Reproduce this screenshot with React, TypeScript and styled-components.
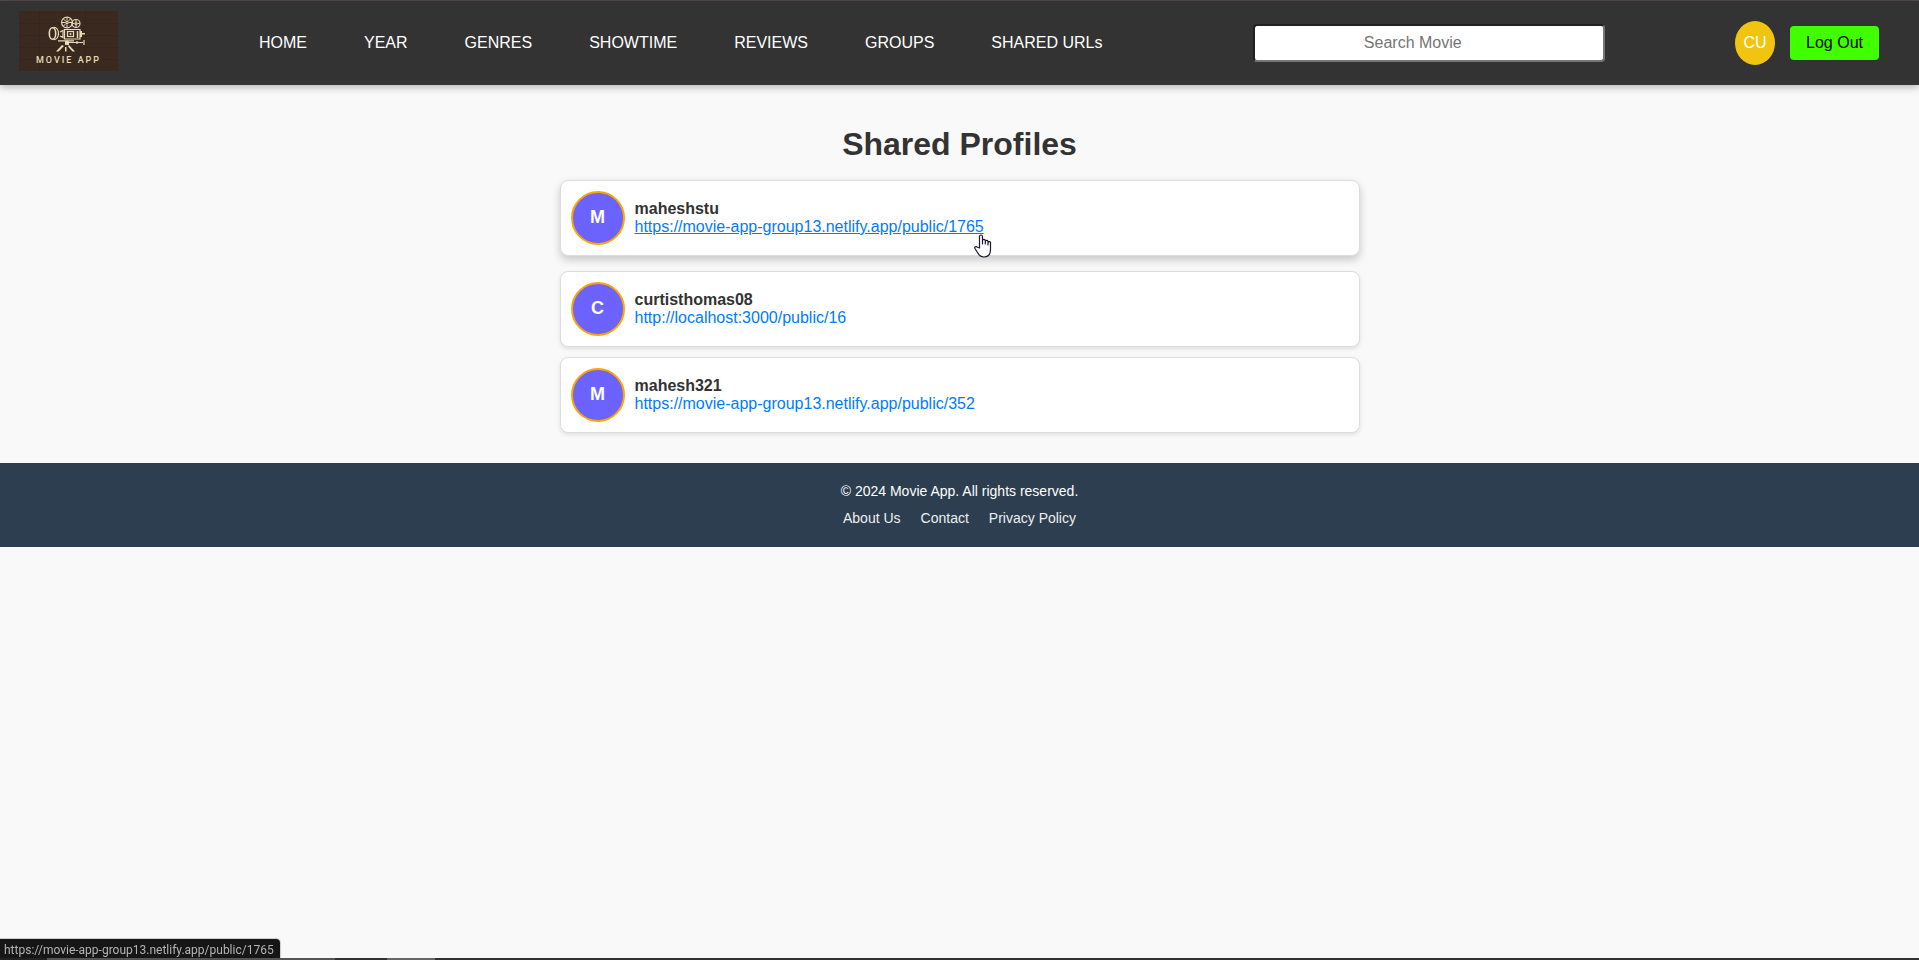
import React from "react";
import styled, { createGlobalStyle } from "styled-components";

const GlobalStyle = createGlobalStyle`
  *, *::before, *::after { box-sizing: border-box; }
  body {
    margin: 0;
    background: #f9f9f9;
    color: #333;
    font-family: Arial, "Liberation Sans", sans-serif;
    font-size: 16px;
    line-height: 18px;
  }
`;

const Page = styled.div`
  min-height: 100vh;
  display: flex;
  flex-direction: column;
  border-top: 1px solid #574b4b;
`;

const Header = styled.header`
  height: 84px;
  padding: 0 40px 0 19px;
  display: flex;
  align-items: center;
  background: #333;
  box-shadow: 0 2px 8px rgba(0, 0, 0, 0.3);
`;

const LogoLink = styled.a`
  flex: none;
  display: block;
  height: 60px;
  margin-bottom: 4px;
`;

const LogoArt = styled.svg`
  display: block;
`;

const Nav = styled.nav`
  flex: none;
  display: flex;
  gap: 57px;
  margin: 0 20px 0 141px;
`;

const NavLink = styled.a`
  color: #fff;
  text-decoration: none;
  white-space: nowrap;
`;

const Search = styled.input`
  flex: none;
  width: 352px;
  height: 38px;
  margin: 0 auto;
  padding: 0 40px 0 8px;
  border: 2px inset #767676;
  border-radius: 4px;
  background: #fff;
  font: inherit;
  text-align: center;
  &::placeholder { color: #757575; }
`;

const Account = styled.div`
  flex: none;
  display: flex;
  align-items: center;
  gap: 15px;
`;

const UserBadge = styled.span`
  width: 40px;
  height: 44px;
  display: flex;
  align-items: center;
  justify-content: center;
  border-radius: 50%;
  background: #f1c40f;
  color: #fff;
`;

const LogoutButton = styled.button`
  height: 34px;
  padding: 0 16px;
  border: none;
  border-radius: 4px;
  background: #40ff00;
  color: #000;
  font: inherit;
  cursor: pointer;
`;

const Main = styled.main`
  width: 100%;
  max-width: 840px;
  margin: 0 auto;
  padding: 40px 20px 30px;
`;

const Title = styled.h1`
  margin: 0 0 16px;
  font-size: 32px;
  line-height: 39px;
  text-align: center;
`;

const ProfileList = styled.ul`
  margin: 0;
  padding: 0;
  list-style: none;
`;

const ProfileCard = styled.li<{ $active: boolean }>`
  display: flex;
  align-items: center;
  gap: 10px;
  margin-bottom: ${(p) => (p.$active ? 15 : 10)}px;
  padding: 10px;
  border: 1px solid #ddd;
  border-radius: 8px;
  background: #fff;
  box-shadow: ${(p) => (p.$active ? "0 4px 8px rgba(0, 0, 0, 0.2)" : "0 2px 4px rgba(0, 0, 0, 0.1)")};
  &:last-child { margin-bottom: 0; }
`;

const Avatar = styled.span`
  flex: none;
  width: 54px;
  height: 54px;
  padding-bottom: 2px;
  display: flex;
  align-items: center;
  justify-content: center;
  border: 2px solid orange;
  border-radius: 50%;
  background: #6c63ff;
  color: #fff;
  font-size: 18px;
  font-weight: bold;
`;

const Details = styled.div`
  display: flex;
  flex-direction: column;
  align-items: flex-start;
`;

const ProfileLink = styled.a<{ $active: boolean }>`
  color: #007bff;
  text-decoration: ${(p) => (p.$active ? "underline" : "none")};
`;

const LinkWithPointer = styled.span`
  position: relative;
  display: flex;
`;

const Pointer = styled.svg`
  position: absolute;
  right: -8px;
  top: 16px;
  pointer-events: none;
`;

const Footer = styled.footer`
  padding: 20px;
  background: #2c3e50;
  color: #fff;
  font-size: 14px;
  line-height: 17px;
  text-align: center;
`;

const Copyright = styled.p`
  margin: 0 0 10px;
`;

const FooterLinks = styled.nav`
  display: flex;
  justify-content: center;
  gap: 20px;
`;

const FooterLink = styled.a`
  color: #ecf0f1;
  text-decoration: none;
`;

const BottomEdge = styled.div`
  position: fixed;
  inset: auto 0 0 0;
`;

const StatusBubble = styled.div`
  width: fit-content;
  height: 19px;
  padding: 0 6px 0 4px;
  border-radius: 0 4px 0 0;
  background: #161616;
  color: #b4b4b4;
  font-family: Roboto, "Open Sans", sans-serif;
  font-size: 12px;
  line-height: 22px;
  box-shadow: 0 0 1px 1px #ccc;
`;

const Taskbar = styled.div`
  position: relative;
  height: 2px;
  background: linear-gradient(
    to right,
    #222 47px, #555 47px, #555 335px, #333 335px, #333 387px,
    #666 387px, #666 435px, #333 435px
  );
`;

const navItems = ["HOME", "YEAR", "GENRES", "SHOWTIME", "REVIEWS", "GROUPS", "SHARED URLs"];

const profiles = [
  { name: "maheshstu", url: "https://movie-app-group13.netlify.app/public/1765" },
  { name: "curtisthomas08", url: "http://localhost:3000/public/16" },
  { name: "mahesh321", url: "https://movie-app-group13.netlify.app/public/352" },
];
const activeUrl = profiles[0].url;

const Logo = () => (
  <LogoArt width="99" height="60" viewBox="0 0 99 60" role="img" aria-label="Movie App">
    <rect width="99" height="60" fill="#3a291f" />
    <path d="M0 12.5H99M0 24.5H99M0 36.5H99M0 48.5H99M20.5 0V60M43.5 0V60M66.5 0V60" stroke="#33241b" opacity=".6" />
    <g fill="none" stroke="#e6dcb8" strokeWidth="1.2">
      <circle cx="48" cy="11.5" r="5.4" />
      <circle cx="57" cy="12.5" r="4" />
      <circle cx="48" cy="11.5" r="1.2" />
      <circle cx="57" cy="12.5" r="1" />
      <path d="M48 6.500v3M48 13.500v3M43 11.500h3M50 11.500h3M44.500 8l2 2M51.500 8l-2 2M44.500 15l2-2M57 9v2M57 14v2M53.500 12.500h2M58.500 12.500h2" strokeWidth="1" />
      <path d="M45.500 18.500H61V28H45.500z" />
      <rect x="48.500" y="20.500" width="6" height="5" />
      <ellipse cx="33.500" cy="22.500" rx="3.200" ry="5.800" strokeWidth="1.600" />
      <path d="M34.500 16.500c3-.5 5 2.500 5 6s-2 6.500-5 6M41 21l3-1.500v7l-3-1.500" />
      <path d="M39 29.800H55M50 31.500H64M58 30v3M65 29v5" />
      <path d="M58.500 20v7" strokeWidth="1.500" />
    </g>
    <g fill="#e6dcb8">
      <path d="M61 20h2v2h3v1.500h-3V26h-2zM46 30h4v4h-4zM43 34l2 1-5.500 5.500h-2.500zM46 36h1.500v4.500H46zM50 34l6 6.500h-2.500L49 35.500z" />
      <circle cx="51.500" cy="23" r="1" />
    </g>
    <text x="17" y="52" fill="#e6dcb8" fontFamily="Roboto, sans-serif" fontSize="9" fontWeight="500" letterSpacing="2">MOVIE APP</text>
  </LogoArt>
);

const HandPointer = () => (
  <Pointer width="18" height="24" viewBox="0 0 18 24" aria-hidden="true">
    <path
      d="M5.500 14V2.500a1.500 1.500 0 0 1 3 0V10 6.800a1.400 1.400 0 0 1 2.800 0V10 7.500a1.400 1.400 0 0 1 2.700 0V11 8.500a1.300 1.300 0 0 1 2.500 0V15c0 5-2.500 8-6.500 8-3.500 0-5-1.500-6.500-4.500L1 14.500c-.8-1.500 1.200-2.500 2.300-1.300z"
      fill="#fff" stroke="#1a1a2a" strokeWidth="1.200" strokeLinejoin="round"
    />
  </Pointer>
);

export default function App() {
  return (
    <>
      <GlobalStyle />
      <Page>
        <Header>
          <LogoLink href="#home"><Logo /></LogoLink>
          <Nav aria-label="Main">
            {navItems.map((item) => <NavLink key={item} href="#">{item}</NavLink>)}
          </Nav>
          <Search type="text" placeholder="Search Movie" aria-label="Search Movie" />
          <Account>
            <UserBadge>CU</UserBadge>
            <LogoutButton type="button">Log Out</LogoutButton>
          </Account>
        </Header>
        <Main>
          <Title>Shared Profiles</Title>
          <ProfileList>
            {profiles.map(({ name, url }) => {
              const active = url === activeUrl;
              return (
                <ProfileCard key={name} $active={active}>
                  <Avatar>{name[0].toUpperCase()}</Avatar>
                  <Details>
                    <strong>{name}</strong>
                    <LinkWithPointer>
                      <ProfileLink href={url} $active={active}>{url}</ProfileLink>
                      {active && <HandPointer />}
                    </LinkWithPointer>
                  </Details>
                </ProfileCard>
              );
            })}
          </ProfileList>
        </Main>
        <Footer>
          <Copyright>© 2024 Movie App. All rights reserved.</Copyright>
          <FooterLinks aria-label="Footer">
            <FooterLink href="#about">About Us</FooterLink>
            <FooterLink href="#contact">Contact</FooterLink>
            <FooterLink href="#privacy">Privacy Policy</FooterLink>
          </FooterLinks>
        </Footer>
      </Page>
      <BottomEdge>
        <StatusBubble>{activeUrl}</StatusBubble>
        <Taskbar />
      </BottomEdge>
    </>
  );
}
